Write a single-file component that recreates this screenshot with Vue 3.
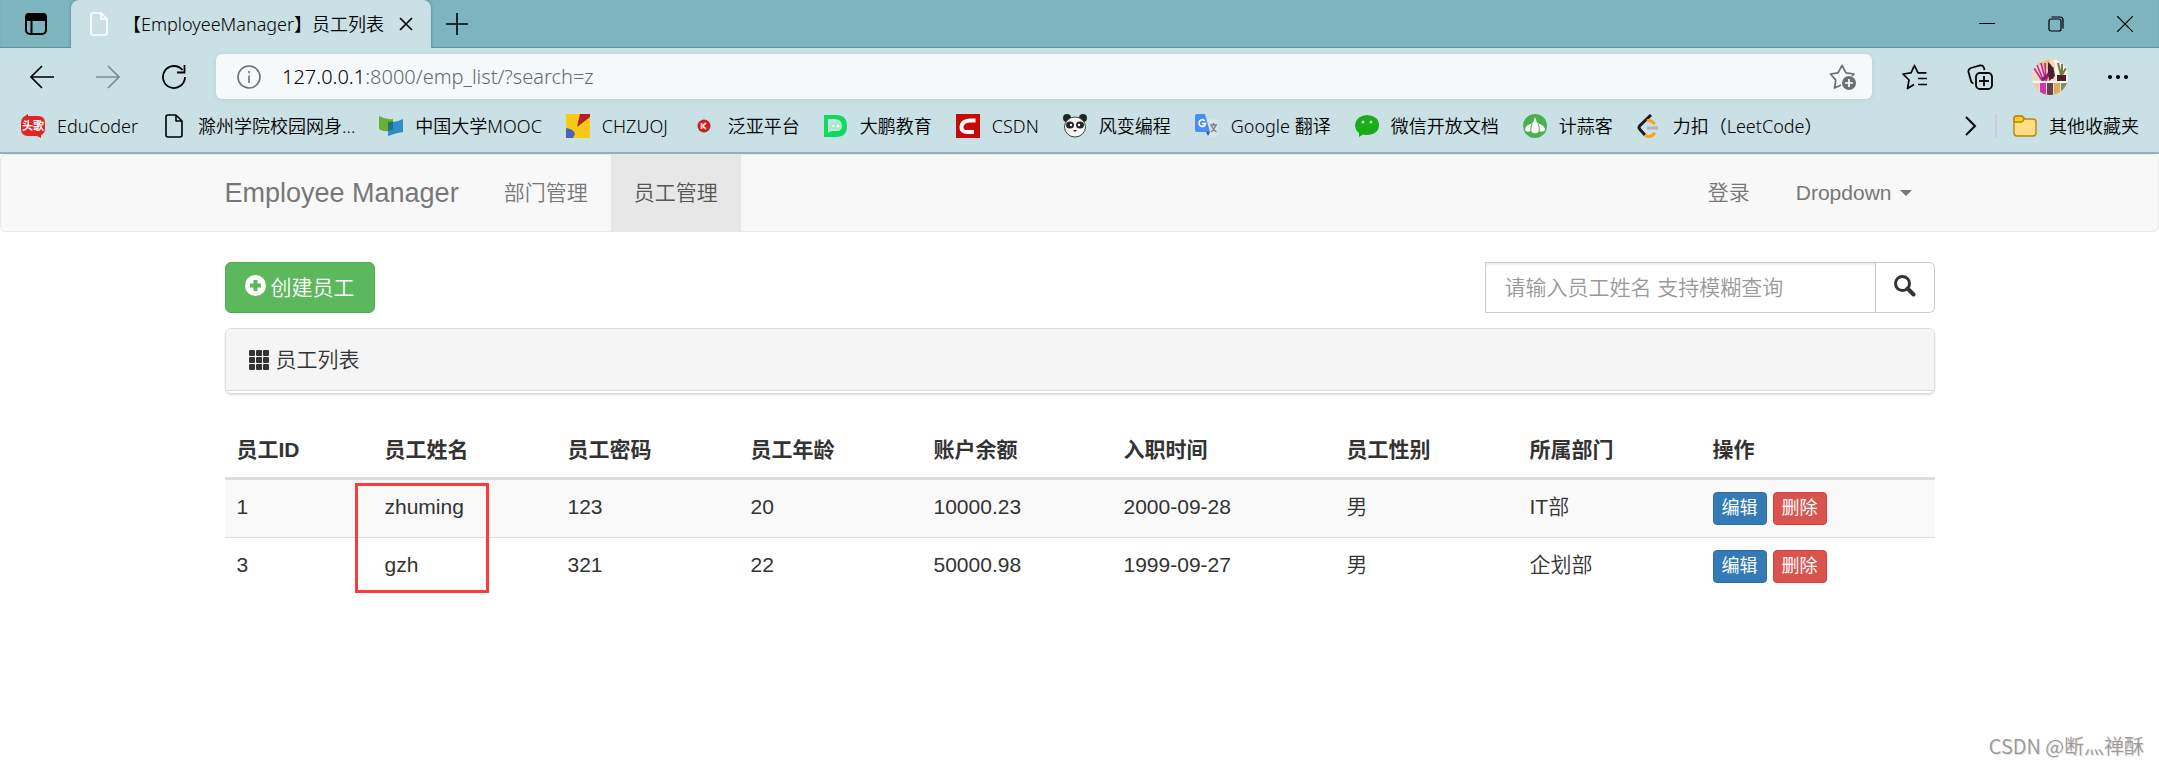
<template>
    <div class="browser">
        <header class="chrome">
            <div class="tab-strip">
                <button class="tab-menu" title="Tab actions">
                    <svg width="24" height="24" viewBox="0 0 24 24" fill="none" stroke="#000" stroke-width="2">
                        <rect x="2" y="2" width="20" height="20" rx="4" />
                        <path d="M2 8V5q0-3 3-3h14q3 0 3 3v3z" fill="#000" />
                        <path d="M7.500 7v15" />
                    </svg>
                </button>
                <div class="tab">
                    <svg width="24" height="24" viewBox="0 0 24 24" fill="none" stroke="#fff" stroke-width="1.600" stroke-linejoin="round">
                        <path d="M14 1H6Q4 1 4 3v18q0 2 2 2h12q2 0 2-2V7zv6h6" />
                    </svg>
                    <span class="tab-title">【EmployeeManager】员工列表</span>
                    <button title="Close tab">
                        <svg width="14" height="14" viewBox="0 0 14 14" stroke="#000" stroke-width="1.700">
                            <path d="M1 1l12 12M13 1L1 13" />
                        </svg>
                    </button>
                </div>
                <button title="New tab">
                    <svg width="22" height="22" viewBox="0 0 22 22" stroke="#000" stroke-width="1.600">
                        <path d="M11 0v22M0 11h22" />
                    </svg>
                </button>
                <div class="window-buttons">
                    <button title="Minimize">
                        <svg width="16" height="16" viewBox="0 0 16 16"><path d="M0 7.500h16" stroke="#000" /></svg>
                    </button>
                    <button title="Restore">
                        <svg width="16" height="16" viewBox="0 0 16 16" fill="none" stroke="#000" stroke-width="1.200">
                            <rect x="1" y="3" width="12" height="12" rx="2" />
                            <path d="M3.500 1H12q3 0 3 3v8.500" />
                        </svg>
                    </button>
                    <button title="Close">
                        <svg width="16" height="16" viewBox="0 0 16 16" stroke="#000" stroke-width="1.200"><path d="M0 0l16 16M16 0L0 16" /></svg>
                    </button>
                </div>
            </div>

            <div class="toolbar">
                <div class="nav-buttons">
                    <button title="Back">
                        <svg width="24" height="24" viewBox="0 0 24 24" fill="none" stroke="#000" stroke-width="1.700">
                            <path d="M24 12H1M12 1L1 12l11 11" />
                        </svg>
                    </button>
                    <button title="Forward">
                        <svg width="24" height="24" viewBox="0 0 24 24" fill="none" stroke="#7a8d94" stroke-width="1.700">
                            <path d="M0 12h23M12 1l11 11-11 11" />
                        </svg>
                    </button>
                    <button title="Refresh">
                        <svg width="24" height="24" viewBox="0 0 24 24" fill="none" stroke="#000" stroke-width="1.800">
                            <path d="M20.500 5A11 11 0 1 0 23 12M22.500 0v7.500H15" />
                        </svg>
                    </button>
                </div>
                <div class="address">
                    <svg width="24" height="24" viewBox="0 0 24 24" fill="none" stroke="#6b7174" stroke-width="1.600">
                        <circle cx="12" cy="12" r="11" />
                        <path d="M12 10.500V18M12 6v2.200" />
                    </svg>
                    <label for="address">127.0.0.1</label>
                    <input id="address" v-model="address" type="text" spellcheck="false">
                    <button title="Add to favorites">
                        <svg width="28" height="28" viewBox="0 0 28 28" fill="none" stroke="#6b6f72" stroke-width="1.700" stroke-linejoin="round">
                            <path d="M12 22l-6.500 3 1.300-8L1.500 11l7.500-1.200L13 2.500l4 7.300 8 1.200-2 2" />
                            <circle cx="20" cy="20" r="7" fill="#6b6f72" stroke="none" />
                            <path d="M20 16v8M16 20h8" stroke="#fff" />
                        </svg>
                    </button>
                </div>
                <div class="tool-buttons">
                    <button title="Favorites">
                        <svg width="26" height="26" viewBox="0 0 26 26" fill="none" stroke="#000" stroke-width="1.700" stroke-linejoin="round">
                            <path d="M12 20.500l-6.500 4L7 16 1 10l8-1.200L12.500 1.500l3.500 7.300h8.500M16 14.500h9M16 20.500h9" />
                        </svg>
                    </button>
                    <button title="Collections">
                        <svg width="26" height="26" viewBox="0 0 26 26" fill="none" stroke="#000" stroke-width="1.800">
                            <rect x="9" y="9" width="16" height="16" rx="4" />
                            <path d="M17 12v10M12 17h10M6.500 19.500q-2-.5-2.500-2.500L1.500 8Q1 5 4 4l9-2.500Q16 1 17 4l.5 2" />
                        </svg>
                    </button>
                    <button title="Profile">
                        <svg width="36" height="36" viewBox="0 0 36 36">
                            <defs><clipPath id="avatar"><circle cx="18" cy="18" r="18" /></clipPath></defs>
                            <g clip-path="url(#avatar)">
                                <path fill="#f3d9bd" d="M0 0h36v36H0z" />
                                <path fill="#e4bd91" d="M5 5L18 0v12z" />
                                <path fill="#f9f5ee" d="M22 0h14v22H24z" />
                                <path d="M2 9l9 14M5 6l7 17M9 4l5 19M13 4l1 19M18 8l-4 15" stroke="#c2259a" stroke-width="1.600" />
                                <path d="M10 21l11-9M20 8v12" stroke="#8d1c61" stroke-width="3" />
                                <path fill="#4c1f2b" d="M16 3q6 4 7 14l-6 5-1-9zM25 16h9v7h-9z" />
                                <path d="M26 4l3 12M30 5v11M34 9l-4 7" stroke="#6d7f3a" stroke-width="2" />
                                <path fill="#fff" d="M0 22h36v2H0z" />
                                <path fill="#f0c9b4" d="M0 24h7v12H0z" />
                                <path fill="#d436a9" d="M8 24h6v12H8z" />
                                <path fill="#68404b" d="M15 24h6v12h-6z" />
                                <path fill="#dda95f" d="M22 24h6v12h-6z" />
                                <path fill="#79945a" d="M29 24h7v12h-7z" />
                            </g>
                        </svg>
                    </button>
                    <button title="More">
                        <svg width="22" height="6" viewBox="0 0 22 6"><circle cx="3" cy="3" r="2" /><circle cx="11" cy="3" r="2" /><circle cx="19" cy="3" r="2" /></svg>
                    </button>
                </div>
            </div>

            <nav class="bookmarks">
                <a v-for="item in bookmarks" :key="item.name" href="#">
                    <svg width="24" height="24" viewBox="0 0 24 24" v-html="item.icon"></svg>
                    <span>{{ item.name }}</span>
                </a>
                <button class="more-bookmarks" title="More bookmarks">
                    <svg width="12" height="20" viewBox="0 0 12 20" fill="none" stroke="#000" stroke-width="2"><path d="M1 1l9 9-9 9" /></svg>
                </button>
                <a href="#" class="other">
                    <svg width="24" height="24" viewBox="0 0 24 24" stroke="#b8860b" stroke-width="1.400">
                        <path d="M1 5q0-3 3-3h5l3 3h8q3 0 3 3v11q0 3-3 3H4q-3 0-3-3z" fill="#ffdf82" />
                        <path d="M1 5q0-3 3-3h4q2 0 3 3-1 3-3 3H1z" fill="#ffc929" />
                    </svg>
                    <span>其他收藏夹</span>
                </a>
            </nav>
        </header>

        <div class="page">
            <nav class="navbar">
                <div class="container">
                    <a class="brand" href="#">Employee Manager</a>
                    <a class="nav-link" href="#">部门管理</a>
                    <a class="nav-link active" href="#">员工管理</a>
                    <a class="nav-link right" href="#">登录</a>
                    <a class="nav-link" href="#">Dropdown <span class="caret"></span></a>
                </div>
            </nav>

            <main class="container">
                <div class="actions">
                    <button class="btn-create">
                        <svg width="21" height="21" viewBox="0 0 21 21">
                            <path fill="#fff" fill-rule="evenodd" d="M10.500 0a10.500 10.500 0 1 0 0 21 10.500 10.500 0 0 0 0-21zM8.500 5h4v3.500H16v4h-3.500V16h-4v-3.500H5v-4h3.500z" />
                        </svg>
                        创建员工
                    </button>
                    <form class="search" @submit.prevent>
                        <input v-model="search" type="text" name="search" aria-label="员工姓名" placeholder="请输入员工姓名 支持模糊查询">
                        <button type="submit" title="查询">
                            <svg width="22" height="22" viewBox="0 0 22 22" fill="none" stroke="#333">
                                <circle cx="8.500" cy="8.500" r="7" stroke-width="3" />
                                <path d="M13.500 13.500l6 6" stroke-width="4" stroke-linecap="round" />
                            </svg>
                        </button>
                    </form>
                </div>

                <div class="panel">
                    <div class="panel-heading">
                        <svg width="20" height="20" viewBox="0 0 20 20" fill="#333">
                            <template v-for="y in 3" :key="y">
                                <rect v-for="x in 3" :key="x" :x="(x - 1) * 7" :y="(y - 1) * 7" width="6" height="6" rx="1" />
                            </template>
                        </svg>
                        员工列表
                    </div>
                </div>

                <div class="table-wrap">
                    <table>
                        <colgroup>
                            <col class="col-id">
                            <col class="col-text">
                            <col class="col-text">
                            <col class="col-text">
                            <col class="col-account">
                            <col class="col-date">
                            <col class="col-text">
                            <col class="col-text">
                            <col>
                        </colgroup>
                        <thead>
                            <tr>
                                <th v-for="title in columns" :key="title">{{ title }}</th>
                            </tr>
                        </thead>
                        <tbody>
                            <tr v-for="emp in employees" :key="emp.id">
                                <td>{{ emp.id }}</td>
                                <td>{{ emp.name }}</td>
                                <td>{{ emp.password }}</td>
                                <td>{{ emp.age }}</td>
                                <td>{{ emp.account }}</td>
                                <td>{{ emp.createTime }}</td>
                                <td>{{ emp.gender }}</td>
                                <td>{{ emp.depart }}</td>
                                <td>
                                    <div class="row-buttons">
                                        <button class="btn-edit">编辑</button>
                                        <button class="btn-delete">删除</button>
                                    </div>
                                </td>
                            </tr>
                        </tbody>
                    </table>
                    <div class="highlight"></div>
                </div>
            </main>

            <footer class="watermark">CSDN @断灬禅酥</footer>
        </div>
    </div>
</template>

<script setup>
import { ref } from 'vue'

const address = ref(':8000/emp_list/?search=z')
const search = ref('')

const bookmarks = [
    {
        name: 'EduCoder',
        icon: '<path fill="#e32424" d="M7 0v2h10q7 0 7 7v6q0 4-4 6v3l-4-2H7q-7 0-7-7V9q0-5 4-7z"/><text x="12" y="16" text-anchor="middle" font-size="11" font-weight="700" font-family="Noto Sans CJK SC, sans-serif" fill="#fff">头歌</text>'
    },
    {
        name: '滁州学院校园网身...',
        icon: '<path d="M14 1H6Q4 1 4 3v18q0 2 2 2h12q2 0 2-2V7zv6h6" fill="none" stroke="#000" stroke-width="1.6" stroke-linejoin="round"/>'
    },
    {
        name: '中国大学MOOC',
        icon: '<path fill="#67b036" d="M0 2q7 4 14 3v11Q6 19 0 15z"/><path fill="#2f8dc6" d="M9 8q8 1 15-3v13q-7 1-15 4z"/><path fill="#20757c" d="M9 8l5-.5V16l-5 1z"/>'
    },
    {
        name: 'CHZUOJ',
        icon: '<path fill="#fac918" d="M0 0h24v24H0z"/><path fill="#b41f25" d="M14 0h10v3L11 13z"/><path fill="#4668b0" d="M0 14q8 1 9 6l-2 4H0z"/>'
    },
    {
        name: '泛亚平台',
        icon: '<circle cx="12" cy="12" r="6.500" fill="#c91f1f"/><path d="M9.500 9v6M14 9l-3.500 3 3.500 3" fill="none" stroke="#f5dcd6" stroke-width="1.800"/>'
    },
    {
        name: '大鹏教育',
        icon: '<path fill="#0edb5e" fill-rule="evenodd" d="M0 1h12q11 0 11 11t-11 11H0zM4 5v14q2-2 5-2h4q5 0 5-5 0-7-8-7z"/><path fill="#a5ecc4" d="M6 9q6-2 11 0 1 4-2 6H9q-2 0-3 1z"/><circle cx="9" cy="12" r="1.300" fill="#fff"/><circle cx="14" cy="12" r="1.300" fill="#fff"/>'
    },
    {
        name: 'CSDN',
        icon: '<path fill="#c90808" d="M0 0h24v24H0z"/><path d="M19.500 6.500h-5q-8 0-9 6-.5 5.500 6 5.500h6.500" fill="none" stroke="#fff" stroke-width="4"/>'
    },
    {
        name: '风变编程',
        icon: '<circle cx="4" cy="4" r="4" fill="#222"/><circle cx="20" cy="4" r="4" fill="#222"/><ellipse cx="12" cy="13" rx="10.500" ry="10" fill="#f6f6f6" stroke="#444"/><ellipse cx="7" cy="11" rx="4" ry="3.500" fill="#252525"/><ellipse cx="17" cy="11" rx="4" ry="3.500" fill="#252525"/><circle cx="8" cy="11" r="1.200" fill="#fff"/><circle cx="16" cy="11" r="1.200" fill="#fff"/><path d="M10 16h4l-2 2z" fill="#222"/>'
    },
    {
        name: 'Google 翻译',
        icon: '<path fill="#dce2e4" d="M10 5h11q2 0 2 2v14q0 2-2 2h-7z"/><path fill="#4b8bf5" d="M2 0h8l5 18H2q-2 0-2-2V2q0-2 2-2z"/><path fill="#3a55b8" d="M11 18h4l-2 4z"/><path d="M10 7q-2-2-4-1-2 1-2 3 0 3 3 3.500 3 0 3.500-3H7" fill="none" stroke="#fff" stroke-width="1.600"/><path d="M15 11h7M18.500 9v2M21 11q-2 5-5 7M16.500 12q2 4 5 6" fill="none" stroke="#73858c" stroke-width="1.500"/>'
    },
    {
        name: '微信开放文档',
        icon: '<path fill="#1aad19" d="M12 1q12 1 12 10t-12 10q-2 0-4-.6L4 23v-4q-4-3-4-8Q1 2 12 1z"/><circle cx="8" cy="8" r="1.500" fill="#c6e8d0"/><circle cx="16" cy="8" r="1.500" fill="#c6e8d0"/>'
    },
    {
        name: '计蒜客',
        icon: '<circle cx="12" cy="12" r="12" fill="#4db04f"/><path fill="#fff" d="M12 3l2 6q8 2 8 7-2 3-6 1-2 3-4 2-2 1-4-2-4 2-6-1 0-5 8-7z"/><path d="M9 10q-2 4-1 7M15 10q2 4 1 7" fill="none" stroke="#4db04f"/>'
    },
    {
        name: '力扣（LeetCode）',
        icon: '<path d="M14 1L3 11.500q-2 2 0 4L8 21" fill="none" stroke="#1a1a1a" stroke-width="3"/><path d="M10 7q3-2 8 3M8 21q5 4 10-2" fill="none" stroke="#ffa116" stroke-width="3"/><path d="M10 14h11" stroke="#b3b3b3" stroke-width="3"/>'
    }
]

const columns = ['员工ID', '员工姓名', '员工密码', '员工年龄', '账户余额', '入职时间', '员工性别', '所属部门', '操作']

const employees = [
    { id: 1, name: 'zhuming', password: '123', age: 20, account: '10000.23', createTime: '2000-09-28', gender: '男', depart: 'IT部' },
    { id: 3, name: 'gzh', password: '321', age: 22, account: '50000.98', createTime: '1999-09-27', gender: '男', depart: '企划部' }
]
</script>

<style>
body {
    margin: 0;
    background: #fff;
}
</style>

<style scoped>
* {
    box-sizing: border-box;
}

button {
    padding: 0;
    border: none;
    background: none;
    font: inherit;
    cursor: pointer;
}

input {
    min-width: 0;
    font: inherit;
}

a {
    color: inherit;
    text-decoration: none;
}

svg {
    display: block;
    flex-shrink: 0;
}

.browser {
    display: flex;
    flex-direction: column;
    min-height: 100vh;
}

/* browser chrome */
.chrome {
    background: #c9e0e4;
    border-bottom: 2px solid #9badb4;
    color: #000;
    font: 350 18px/24px "Noto Sans", "Noto Sans CJK SC", sans-serif;
}

.tab-strip {
    display: flex;
    height: 48px;
    background: #7db4be;
    box-shadow: inset 0 -1px 1px #5d929d;
}

.tab-menu {
    width: 71px;
    padding: 0 24px;
}

.tab {
    display: flex;
    align-items: center;
    width: 360px;
    padding: 0 18px 0 16px;
    margin-right: 15px;
    border-radius: 8px 8px 0 0;
    background: #c9e0e4;
    box-shadow: 0 0 3px #3f7682;
    clip-path: inset(0 -4px 0 -4px);
}

.tab-title {
    flex: 1;
    margin-left: 12px;
    white-space: nowrap;
}

.window-buttons {
    display: flex;
    margin-left: auto;
}

.window-buttons button {
    display: flex;
    align-items: center;
    justify-content: center;
    width: 69px;
}

.toolbar {
    display: flex;
    align-items: center;
    padding: 6px 30px 0;
}

.nav-buttons {
    display: flex;
    gap: 42px;
    margin-right: 30px;
}

.address {
    display: flex;
    flex: 1;
    align-items: center;
    height: 45px;
    padding: 0 15px 0 21px;
    border-radius: 6px;
    background: #f5f9fa;
    box-shadow: 0 1px 4px #b5ced3;
    font-size: 20px;
}

.address label {
    margin-left: 21px;
}

.address input {
    flex: 1;
    padding: 0;
    border: none;
    outline: none;
    background: none;
    color: #63696b;
}

.tool-buttons {
    display: flex;
    align-items: center;
    gap: 39px;
    margin-left: 30px;
}

.bookmarks {
    display: flex;
    align-items: center;
    gap: 24px;
    height: 53px;
    padding: 0 20px 0 21px;
    white-space: nowrap;
}

.bookmarks a {
    display: flex;
    align-items: center;
    gap: 12px;
}

.more-bookmarks {
    margin-left: auto;
}

.bookmarks .other {
    padding-left: 16px;
    margin-left: -6px;
    border-left: 2px solid #c9cfd1;
}

/* employee page */
.page {
    display: flex;
    flex: 1;
    flex-direction: column;
    color: #333;
    font: 350 21px/30px "Liberation Sans", "Noto Sans CJK SC", sans-serif;
}

.container {
    width: 100%;
    max-width: 1710px;
    margin: 0 auto;
}

.navbar {
    margin-bottom: 30px;
    border: 1px solid #e7e7e7;
    border-radius: 6px;
    background: #f8f8f8;
    color: #777;
}

.navbar .container {
    display: flex;
    height: 76px;
}

.brand,
.nav-link {
    display: flex;
    align-items: center;
}

.brand {
    padding-right: 22px;
    font-size: 27px;
}

.nav-link {
    padding: 0 23px;
}

.nav-link.active {
    background: #e7e7e7;
    color: #555;
}

.nav-link.right {
    margin-left: auto;
}

.caret {
    margin-left: 8px;
    border-top: 6px solid #777;
    border-right: 6px solid transparent;
    border-left: 6px solid transparent;
}

.actions {
    display: flex;
    justify-content: space-between;
    margin-bottom: 15px;
}

.actions svg {
    margin-bottom: 4px;
}

.btn-create {
    display: flex;
    align-items: center;
    gap: 5px;
    height: 51px;
    padding: 0 19px;
    border: 1px solid #4cae4c;
    border-radius: 6px;
    background: #5cb85c;
    color: #fff;
}

.search {
    display: flex;
    width: 450px;
    height: 51px;
}

.search input {
    flex: 1;
    padding: 0 19px;
    border: 1px solid #ccc;
    outline: none;
    box-shadow: inset 0 2px 2px #eee;
    color: #555;
}

.search input::placeholder {
    color: #999;
    opacity: 1;
}

.search button {
    width: 59px;
    padding-left: 18px;
    border: 1px solid #ccc;
    border-left: none;
    border-radius: 0 6px 6px 0;
}

.panel {
    margin-bottom: 29px;
    border: 1px solid #ddd;
    border-radius: 6px;
    box-shadow: 0 1px 2px #ddd;
}

.panel-heading {
    display: flex;
    align-items: center;
    gap: 7px;
    height: 62px;
    margin-bottom: 2px;
    padding: 0 23px;
    border-bottom: 1px solid #ddd;
    border-radius: 5px 5px 0 0;
    background: #f5f5f5;
}

.table-wrap {
    position: relative;
}

table {
    width: 100%;
    border-spacing: 0;
    table-layout: fixed;
}

.col-id {
    width: 148px;
}

.col-text {
    width: 183px;
}

.col-account {
    width: 190px;
}

.col-date {
    width: 223px;
}

th,
td {
    padding: 12px;
    text-align: left;
    vertical-align: top;
}

th {
    border-bottom: 3px solid #ddd;
    font-weight: 700;
}

td {
    height: 57px;
}

tbody tr:nth-child(odd) td {
    background: #f9f9f9;
}

tbody tr + tr td {
    border-top: 1px solid #ddd;
}

.row-buttons {
    display: flex;
    gap: 6px;
}

.row-buttons button {
    width: 54px;
    height: 33px;
    border: 1px solid;
    border-radius: 4px;
    color: #fff;
    font-size: 18px;
    font-weight: 400;
    line-height: 27px;
}

.row-buttons .btn-edit {
    border-color: #2e6da4;
    background: #337ab7;
}

.row-buttons .btn-delete {
    border-color: #d43f3a;
    background: #d9534f;
}

/* frame around the matched names */
.highlight {
    position: absolute;
    top: 60px;
    left: 130px;
    width: 134px;
    height: 110px;
    border: 3px solid #ff3a3a;
}

.watermark {
    margin-top: auto;
    padding: 0 15px 5px;
    color: #999;
    font-family: "Noto Sans CJK SC", sans-serif;
    font-size: 20px;
    text-align: right;
    text-shadow: 1px 1px 1px #ddd;
}
</style>
